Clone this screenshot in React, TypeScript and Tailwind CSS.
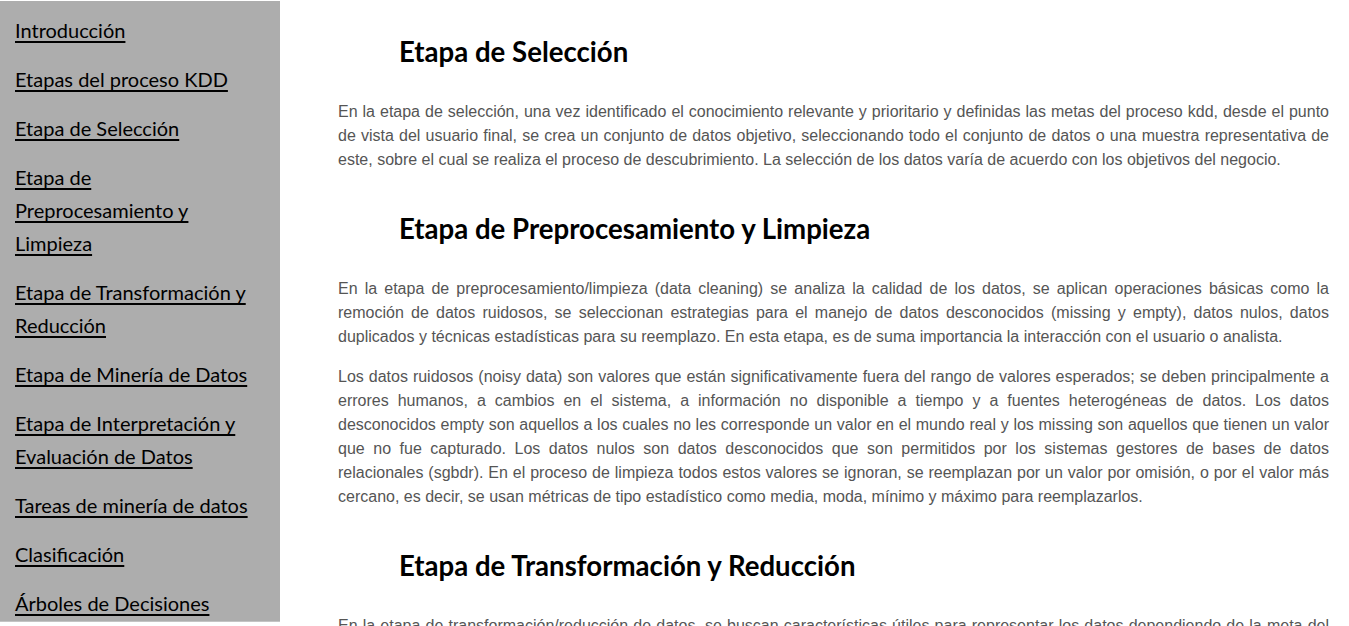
import React from "react"

const navItems = [
    "Introducción",
    "Etapas del proceso KDD",
    "Etapa de Selección",
    "Etapa de Preprocesamiento y Limpieza",
    "Etapa de Transformación y Reducción",
    "Etapa de Minería de Datos",
    "Etapa de Interpretación y Evaluación de Datos",
    "Tareas de minería de datos",
    "Clasificación",
    "Árboles de Decisiones",
    "Reglas de Asociación",
    "Agrupamiento",
]

const sections = [
    {
        title: "Etapa de Selección",
        paragraphs: [
            "En la etapa de selección, una vez identificado el conocimiento relevante y prioritario y definidas las metas del proceso kdd, desde el punto de vista del usuario final, se crea un conjunto de datos objetivo, seleccionando todo el conjunto de datos o una muestra representativa de este, sobre el cual se realiza el proceso de descubrimiento. La selección de los datos varía de acuerdo con los objetivos del negocio.",
        ],
    },
    {
        title: "Etapa de Preprocesamiento y Limpieza",
        paragraphs: [
            "En la etapa de preprocesamiento/limpieza (data cleaning) se analiza la calidad de los datos, se aplican operaciones básicas como la remoción de datos ruidosos, se seleccionan estrategias para el manejo de datos desconocidos (missing y empty), datos nulos, datos duplicados y técnicas estadísticas para su reemplazo. En esta etapa, es de suma importancia la interacción con el usuario o analista.",
            "Los datos ruidosos (noisy data) son valores que están significativamente fuera del rango de valores esperados; se deben principalmente a errores humanos, a cambios en el sistema, a información no disponible a tiempo y a fuentes heterogéneas de datos. Los datos desconocidos empty son aquellos a los cuales no les corresponde un valor en el mundo real y los missing son aquellos que tienen un valor que no fue capturado. Los datos nulos son datos desconocidos que son permitidos por los sistemas gestores de bases de datos relacionales (sgbdr). En el proceso de limpieza todos estos valores se ignoran, se reemplazan por un valor por omisión, o por el valor más cercano, es decir, se usan métricas de tipo estadístico como media, moda, mínimo y máximo para reemplazarlos.",
        ],
    },
    {
        title: "Etapa de Transformación y Reducción",
        paragraphs: [
            "En la etapa de transformación/reducción de datos, se buscan características útiles para representar los datos dependiendo de la meta del proceso. Se utilizan métodos de reducción de dimensiones o de transformación para disminuir el número efectivo de variables bajo consideración o para encontrar representaciones invariantes de los datos.",
        ],
    },
]

export default function App() {
    return (
        <div className="flex min-h-screen bg-white">
            <aside className="mt-px h-[621px] w-[280px] shrink-0 overflow-hidden border-b border-[#c4c4c4] bg-[#adadad] pt-[13px] pl-[15px] pr-[29px]">
                <ul className="flex flex-col gap-4">
                    {navItems.map((item) => (
                        <li key={item}>
                            <a
                                href="#"
                                className="text-[20px] leading-[33px] text-black underline decoration-[2px] underline-offset-[3px] [font-family:Lato,'Open_Sans',sans-serif]"
                            >
                                {item}
                            </a>
                        </li>
                    ))}
                </ul>
            </aside>

            <main className="flex flex-1 flex-col pt-[11px] pl-[58px] pr-[20px]">
                {sections.map((section) => (
                    <section key={section.title} className="flex flex-col">
                        <h2 className="mt-[23px] mb-[30px] pl-[61px] text-[27.6px] leading-[36px] font-bold text-black [font-family:Lato,sans-serif]">
                            {section.title}
                        </h2>
                        {section.paragraphs.map((p, i) => (
                            <p
                                key={i}
                                className="mb-4 text-justify text-[16px] leading-[24px] text-[#555555] [font-family:'Liberation_Sans',Arial,sans-serif]"
                            >
                                {p}
                            </p>
                        ))}
                    </section>
                ))}
            </main>
        </div>
    )
}
